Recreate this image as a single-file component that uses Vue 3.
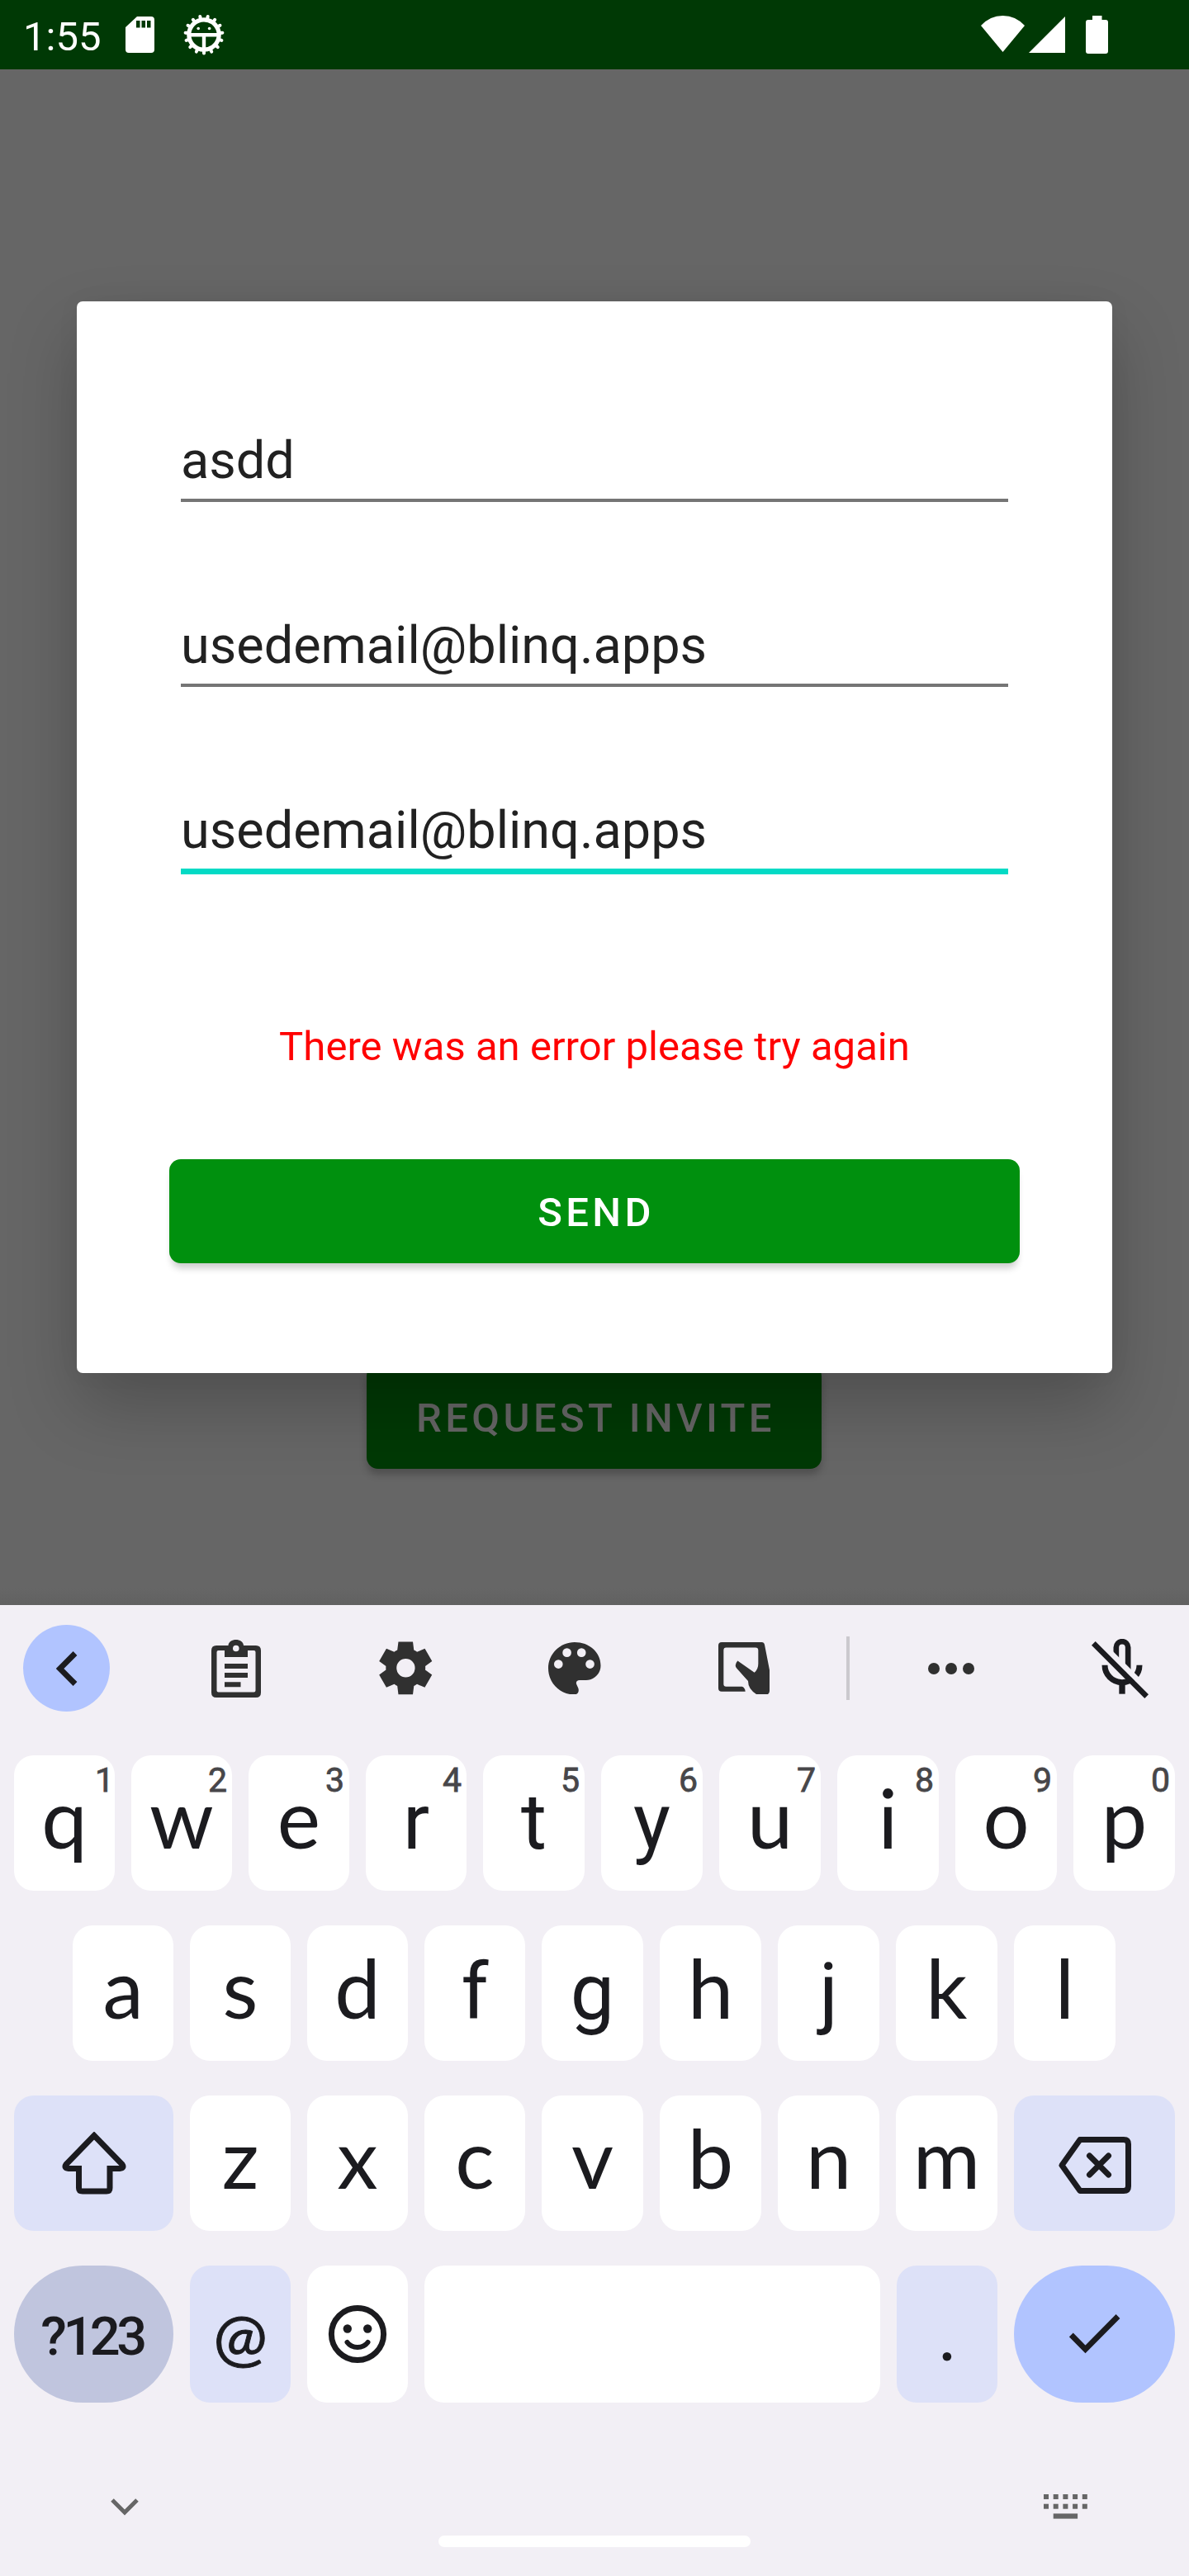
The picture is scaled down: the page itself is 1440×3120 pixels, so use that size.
<script setup>
const rows = {
  top: 'qwertyuiop'.split('').map((c, i) => ({ c, hint: String((i + 1) % 10) })),
  home: 'asdfghjkl'.split(''),
  bottom: 'zxcvbnm'.split('')
}
const fields = ['asdd', 'usedemail@blinq.apps', 'usedemail@blinq.apps']
const teeth = Array.from({ length: 15 }, (_, i) => i * 24)
const keyDots = [0, 11.7, 23.4, 35.1, 46.8]
const isAlt = c => 'rtyfgj'.includes(c)
</script>

<template>
  <div class="phone">
    <header class="status">
      <span class="time">1:55</span>
      <svg class="sd" viewBox="0 0 35 44"><path fill="#fff" fill-rule="evenodd" d="M14 0H31Q35 0 35 4V40Q35 44 31 44H4Q0 44 0 40V13ZM13 5V13.500H17.500V5ZM19.500 5V13.500H24V5ZM26 5V13.500H30.500V5Z" /></svg>
      <svg class="bug" viewBox="-25 -25 50 50">
        <g stroke="#fff" fill="none">
          <circle r="18.200" stroke-width="5.200" />
          <path v-for="a in teeth" :key="a" d="M0 19V22.500" stroke-width="4" stroke-linecap="round" :transform="`rotate(${a})`" />
          <path d="M-17 .3H17" stroke-width="4.600" />
          <path d="M0 0V17" stroke-width="4.400" />
        </g>
        <circle cx="-6.800" cy="-7.500" r="1.800" fill="#fff" /><circle cx="6.600" cy="-7.500" r="1.800" fill="#fff" />
      </svg>
      <span class="grow"></span>
      <svg class="wifi" viewBox="0 0 53 44"><path fill="#fff" d="M0 12Q11 0 26.500 0T53 12L26.500 44Z" /></svg>
      <svg class="signal" viewBox="0 0 44 44"><path fill="#fff" d="M44 0V44H0Z" /></svg>
      <svg class="battery" viewBox="0 0 27 46"><path fill="#fff" d="M8 0H19.500V5H24Q27 5 27 8V43Q27 46 24 46H3Q0 46 0 43V8Q0 5 3 5H8Z" /></svg>
    </header>

    <main class="screen">
      <button class="invite">REQUEST INVITE</button>
      <section class="dialog">
        <div v-for="(f, i) in fields" :key="i" class="field" :class="{ focused: i === 2 }">{{ f }}</div>
        <p class="error">There was an error please try again</p>
        <button class="send">SEND</button>
      </section>
    </main>

    <section class="keyboard">
      <div class="toolbar">
        <span class="back"><svg width="26" height="42" viewBox="0 0 26 42"><path d="M23 2.500L4.500 21L23 39.500" fill="none" stroke="#1b1b1f" stroke-width="6.800" /></svg></span>
        <svg class="clip" viewBox="0 0 60 70">
          <path fill="#303030" fill-rule="evenodd" d="M6 7H20.500C21-2.300 38.500-2.300 39 7H54Q60 7 60 13V64Q60 70 54 70H6Q0 70 0 64V13Q0 7 6 7ZM16 13H8.500Q6.500 13 6.500 15V61.500Q6.500 63.500 8.500 63.500H51.500Q53.500 63.500 53.500 61.500V15Q53.500 13 51.500 13H44V21H16ZM29.800 6.700A3.800 3.800 0 1 0 29.800 14.300A3.800 3.800 0 1 0 29.800 6.700Z" />
          <path fill="#303030" d="M16 29H44V35H16ZM16 40H44V46H16ZM16 51.300H35.500V57.300H16Z" />
        </svg>
        <svg class="gear" viewBox="0 -960 960 960"><path fill="#303030" d="m370-80-16-128q-13-5-24.500-12T307-235l-119 50L78-375l103-78q-1-7-1-13.500v-27q0-6.500 1-13.500L78-585l110-190 119 50q11-8 23-15t24-12l16-128h220l16 128q13 5 24.500 12t22.500 15l119-50 110 190-103 78q1 7 1 13.500v27q0 6.500-2 13.500l103 78-110 190-118-50q-11 8-23 15t-24 12L590-80H370Zm112-260q58 0 99-41t41-99q0-58-41-99t-99-41q-59 0-99.500 41T342-480q0 58 40.500 99t99.500 41Z" /></svg>
        <svg class="palette" viewBox="43 57 191 191">
          <path fill="#303030" d="M139 57C192 57 234 93 234 142C234 172 210 195 181 195H157C146 195 142 204 147 213L152 224C157 236 150 248 138 248C85 248 43 205 43 152C43 100 86 57 139 57Z" />
          <g fill="#f2eff5"><circle cx="80" cy="137" r="16" /><circle cx="111" cy="95" r="16" /><circle cx="164" cy="95" r="16" /><circle cx="195" cy="137" r="16" /></g>
        </svg>
        <svg class="hand" viewBox="660 57 186 190"><path fill="#303030" d="M672 57H818Q826 57 828 66L846 158V234Q846 247 834 247H800Q768 228 768 198L727 152Q716 140 730 124L791 167Q805 155 805 135V86Q805 76 795 76H688Q679 76 679 86V209Q679 218 688 218H746Q757 222 758 236H672Q660 236 660 224V69Q660 57 672 57Z" /></svg>
        <span class="divider"></span>
        <svg class="more" viewBox="0 0 56 14" fill="#303030"><circle cx="7" cy="7" r="7" /><circle cx="28" cy="7" r="7" /><circle cx="49" cy="7" r="7" /></svg>
        <svg class="mic" viewBox="66 48 207 216" fill="none" stroke="#1b1b1f">
          <path d="M155.500 120V79a21.500 21.500 0 0 1 43 0V170" stroke-width="20" />
          <path d="M114 143a62.500 62.500 0 0 0 126 0" stroke-width="21" />
          <path d="M177 205V248" stroke-width="22" />
          <path d="M90 53.500L250 213.500" stroke="#f2eff5" stroke-width="20" />
          <path d="M73 64L266 257" stroke-width="20" />
        </svg>
      </div>

      <div class="row">
        <div v-for="k in rows.top" :key="k.c" class="key" :class="{ alt: isAlt(k.c) }">{{ k.c }}<sup class="hint" :class="{ one: k.hint === '1' }">{{ k.hint }}</sup></div>
      </div>
      <div class="row inset">
        <div v-for="k in rows.home" :key="k" class="key" :class="{ alt: isAlt(k) }">{{ k }}</div>
      </div>
      <div class="row">
        <div class="key wide-left tint icon">
          <svg width="78" height="76" viewBox="0 0 78 76"><path d="M39 4.500L5 39.500Q2 44 8 44.500H20.500V68Q20.500 72 25 72H54Q58 72 58 68V44.500H70Q76 44 73 39.500Z" fill="none" stroke="#1b1b1f" stroke-width="7" /></svg>
        </div>
        <div v-for="k in rows.bottom" :key="k" class="key">{{ k }}</div>
        <div class="key wide-right tint icon">
          <svg class="erase" width="90" height="72" viewBox="0 0 90 72" fill="none" stroke="#1b1b1f" stroke-width="7">
            <path d="M27 4.500H80Q85.500 4.500 85.500 10V61Q85.500 66.500 80 66.500H27L5 35.500Z" stroke-linejoin="round" />
            <path d="M38.500 24L61.500 47M61.500 24L38.500 47" stroke-linecap="round" />
          </svg>
        </div>
      </div>
      <div class="row last">
        <div class="key wide-left symbols">?123</div>
        <div class="key tint at">@</div>
        <div class="key icon">
          <svg width="72" height="72" viewBox="-36 -36 72 72" fill="none" stroke="#1b1b1f">
            <circle r="31.600" stroke-width="7" />
            <path d="M-12.500 10Q-8 16 0 16T12.500 10" stroke-width="6" stroke-linecap="round" />
            <circle cx="-12.200" cy="-6.500" r="5.200" fill="#1b1b1f" stroke="none" /><circle cx="12.200" cy="-6.500" r="5.200" fill="#1b1b1f" stroke="none" />
          </svg>
        </div>
        <div class="key space"></div>
        <div class="key tint dot">.</div>
        <div class="key wide-right enter icon">
          <svg width="62" height="48" viewBox="0 0 62 48"><path d="M2.300 25L19.500 42.500L59 2.500" fill="none" stroke="#1b1b1f" stroke-width="6.800" /></svg>
        </div>
      </div>

      <footer class="nav">
        <svg class="down" viewBox="0 0 34 21"><path d="M2 2L17 17L32 2" fill="none" stroke="#666" stroke-width="5" /></svg>
        <span class="pill"></span>
        <svg class="ime" viewBox="0 0 53 30" fill="#666">
          <g v-for="x in keyDots" :key="x"><rect :x="x" y="0" width="6" height="6" /><rect :x="x" y="11.700" width="6" height="6" /></g>
          <rect x="11.700" y="23.400" width="29.400" height="6.200" />
        </svg>
      </footer>
    </section>
  </div>
</template>

<style>
body { margin: 0; }
</style>

<style scoped>
.phone { width: 1440px; height: 3120px; overflow: hidden; font-family: Roboto, sans-serif; display: flex; flex-direction: column; }
svg { display: block; flex: none; }
button { border: 0; padding: 0; font-family: inherit; }

.status { height: 84px; background: #003905; color: #fff; display: flex; align-items: flex-start; box-sizing: border-box; padding: 0 98px 0 28px; flex: none; }
.time { font-size: 49px; line-height: 89px; width: 124px; }
.sd { width: 35px; height: 44px; margin-top: 20px; }
.bug { width: 50px; height: 50px; margin: 17px 0 0 34.500px; }
.grow { flex: 1; }
.wifi { width: 53px; height: 44px; margin-top: 19px; }
.signal { width: 44px; height: 44px; margin: 19.500px 0 0 5px; }
.battery { width: 27px; height: 46px; margin: 19px 0 0 25px; }

.screen { position: relative; height: 1860px; flex: none; background: linear-gradient(#666 1840px, #616161); box-sizing: border-box; padding-top: 1569px; overflow: hidden; }
.invite, .send { height: 126px; border-radius: 14px; font-size: 49px; font-weight: 500; letter-spacing: 4.370px; line-height: 129px; text-align: center; text-indent: 4px; white-space: nowrap; }
.invite { display: block; width: 551px; margin: 0 0 0 444px; background: #003905; color: #666; box-shadow: 0 7px 10px rgba(0, 0, 0, .22); }
.dialog { position: absolute; left: 93px; top: 281px; width: 1254px; height: 1298px; box-sizing: border-box; padding: 151px 112px 0; background: #fff; border-radius: 7px; box-shadow: 0 40px 84px rgba(0, 0, 0, .22), 0 0 30px rgba(0, 0, 0, .04); }
.field { height: 88px; line-height: 84px; margin: 0 14px 132px; font-size: 63px; color: #212121; border-bottom: 4px solid #757575; white-space: nowrap; }
.field.focused { border-bottom: 7px solid #03dac5; margin-bottom: 0; }
.error { margin: 179px 0 106px; font-size: 49px; line-height: 60px; letter-spacing: .040px; text-align: center; color: #f00; white-space: nowrap; }
.send { display: block; width: 1030px; background: #00900e; color: #fff; box-shadow: 0 9px 8px -3px rgba(0, 0, 0, .2); }

.keyboard { flex: 1; background: #f2eff5; color: #1b1b1f; display: flex; flex-direction: column; padding: 0 17px; }
.toolbar { height: 182px; display: flex; padding: 24px 32px 53px 11px; box-sizing: border-box; align-items: center; }
.back { width: 105px; height: 105px; border-radius: 50%; background: #b1c4ff; display: flex; align-items: center; justify-content: center; }
.clip { width: 60px; height: 70px; margin-left: 123px; }
.gear { width: 76.500px; height: 76.500px; margin-left: 136.500px; }
.palette { width: 63.500px; height: 63.500px; margin-left: 135px; }
.hand { width: 62px; height: 63.500px; margin-left: 142.500px; }
.divider { width: 4px; height: 77px; margin-left: 93px; background: #cbc9ce; }
.more { width: 56px; height: 14px; margin-left: 95px; }
.mic { width: 69px; height: 72px; margin-left: 142px; }

.row { display: flex; gap: 20px; height: 164px; margin-bottom: 42px; }
.inset { padding: 0 72px 0 71px; }
.key { position: relative; flex: 0 0 123px; background: #fff; border-radius: 24px; text-align: center; font-family: Lato, sans-serif; font-size: 99px; line-height: 149px; }
.key:nth-child(-n+4) { flex-basis: 122px; }
.key.alt { font-family: Roboto, sans-serif; font-size: 95px; line-height: 161px; }
.hint { position: absolute; right: 6px; top: 13px; font: 400 41px/34px Roboto, sans-serif; color: #474649; -webkit-text-stroke: .800px #474649; }
.hint.one { right: 1px; }
.key.wide-left { flex-basis: 193px; }
.key.wide-right { flex-basis: 195px; }
.tint { background: #dde1f8; }
.icon { display: flex; align-items: center; justify-content: center; }
.erase { margin-top: 6px; }
.last { height: 166px; margin-bottom: 0; }
.symbols { border-radius: 83px; background: #c0c5de; font-family: Roboto, sans-serif; font-weight: 500; font-size: 65px; line-height: 173px; letter-spacing: -4.500px; text-indent: -4px; }
.at { font-size: 78px; line-height: 171px; -webkit-text-stroke: .900px #1b1b1f; }
.key.space { flex-basis: 552px; }
.key.dot { flex-basis: 122px; line-height: 166px; font-size: 84px; }
.enter { border-radius: 83px; background: #b1c4ff; }

.nav { position: relative; display: flex; align-items: flex-start; padding: 111px 106px 0 117px; justify-content: space-between; }
.down { width: 34px; height: 21px; margin-top: 5px; }
.ime { width: 53px; height: 30px; }
.pill { position: absolute; left: 514px; top: 161px; width: 378px; height: 14px; border-radius: 7px; background: #fff; }
</style>
